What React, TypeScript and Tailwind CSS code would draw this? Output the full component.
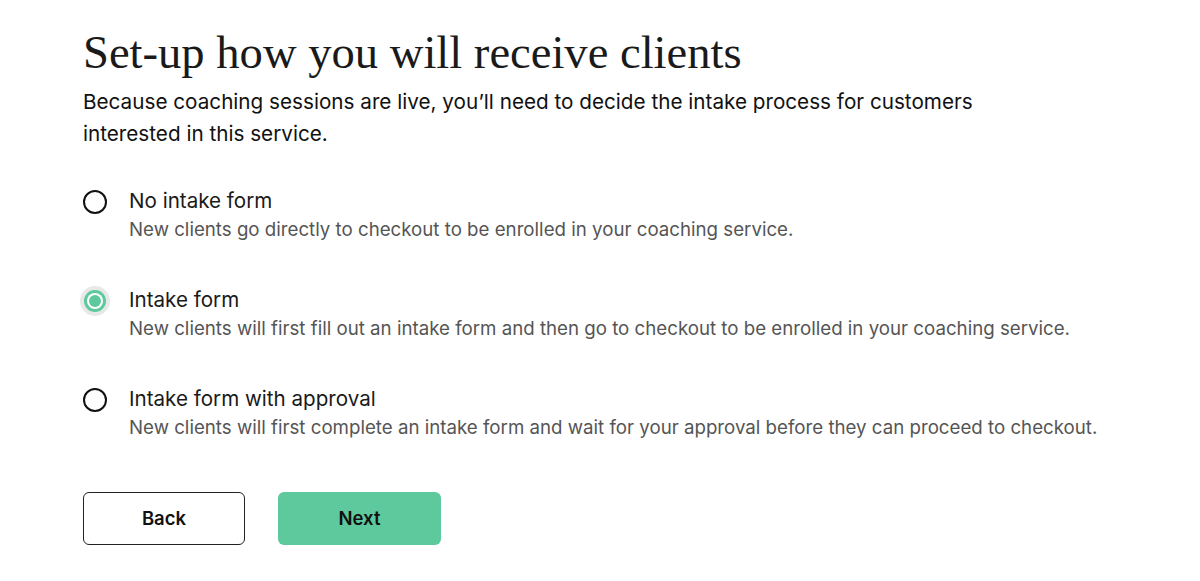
import { useState } from 'react';

const options = [
  {
    id: 'none',
    title: 'No intake form',
    description: 'New clients go directly to checkout to be enrolled in your coaching service.',
  },
  {
    id: 'form',
    title: 'Intake form',
    description:
      'New clients will first fill out an intake form and then go to checkout to be enrolled in your coaching service.',
  },
  {
    id: 'approval',
    title: 'Intake form with approval',
    description:
      'New clients will first complete an intake form and wait for your approval before they can proceed to checkout.',
  },
];

const sans = { fontFamily: 'Inter, "Liberation Sans", sans-serif' };

export default function App() {
  const [selected, setSelected] = useState('form');

  return (
    <div className="min-h-[581px] bg-white text-[#111]" style={sans}>
      <div className="pl-[83px] pt-[24px]">
        <h1 className="text-[46.6px] leading-[56px] font-normal text-[#1a1a1a] font-['Liberation_Serif',serif]">
          Set-up how you will receive clients
        </h1>
        <p className="mt-[6px] w-[930px] text-[20.7px] leading-[32px] text-[#111]">
          Because coaching sessions are live, you’ll need to decide the intake process for customers
          interested in this service.
        </p>

        <div className="mt-[37px] flex flex-col gap-[43px]">
          {options.map((opt) => {
            const active = selected === opt.id;
            return (
              <label
                key={opt.id}
                className="flex cursor-pointer items-start gap-[22px]"
                onClick={() => setSelected(opt.id)}
              >
                <span className="mt-[3px] flex h-6 w-6 shrink-0 items-center justify-center">
                  {active ? (
                    <span className="flex h-[22px] w-[22px] items-center justify-center rounded-full bg-[#5ec99d] ring-4 ring-[#e8e8e8]">
                      <span className="flex h-[16px] w-[16px] items-center justify-center rounded-full bg-white">
                        <span className="h-[12px] w-[12px] rounded-full bg-[#5ec99d]" />
                      </span>
                    </span>
                  ) : (
                    <span className="h-6 w-6 rounded-full border-2 border-[#111]" />
                  )}
                </span>
                <span className="flex flex-col">
                  <span className="text-[20.6px] leading-[28px] text-[#1a1a1a]">{opt.title}</span>
                  <span className="mt-[2px] text-[18.7px] leading-[26px] text-[#555]">
                    {opt.description}
                  </span>
                </span>
              </label>
            );
          })}
        </div>

        <div className="mt-[51px] flex gap-[33px]">
          <button className="h-[53px] w-[162px] rounded-[6px] border border-[#222] bg-white text-[18.5px] font-semibold text-[#111]">
            Back
          </button>
          <button className="h-[53px] w-[163px] rounded-[6px] bg-[#5ec99d] text-[18.5px] font-semibold text-[#111]">
            Next
          </button>
        </div>
      </div>
    </div>
  );
}
